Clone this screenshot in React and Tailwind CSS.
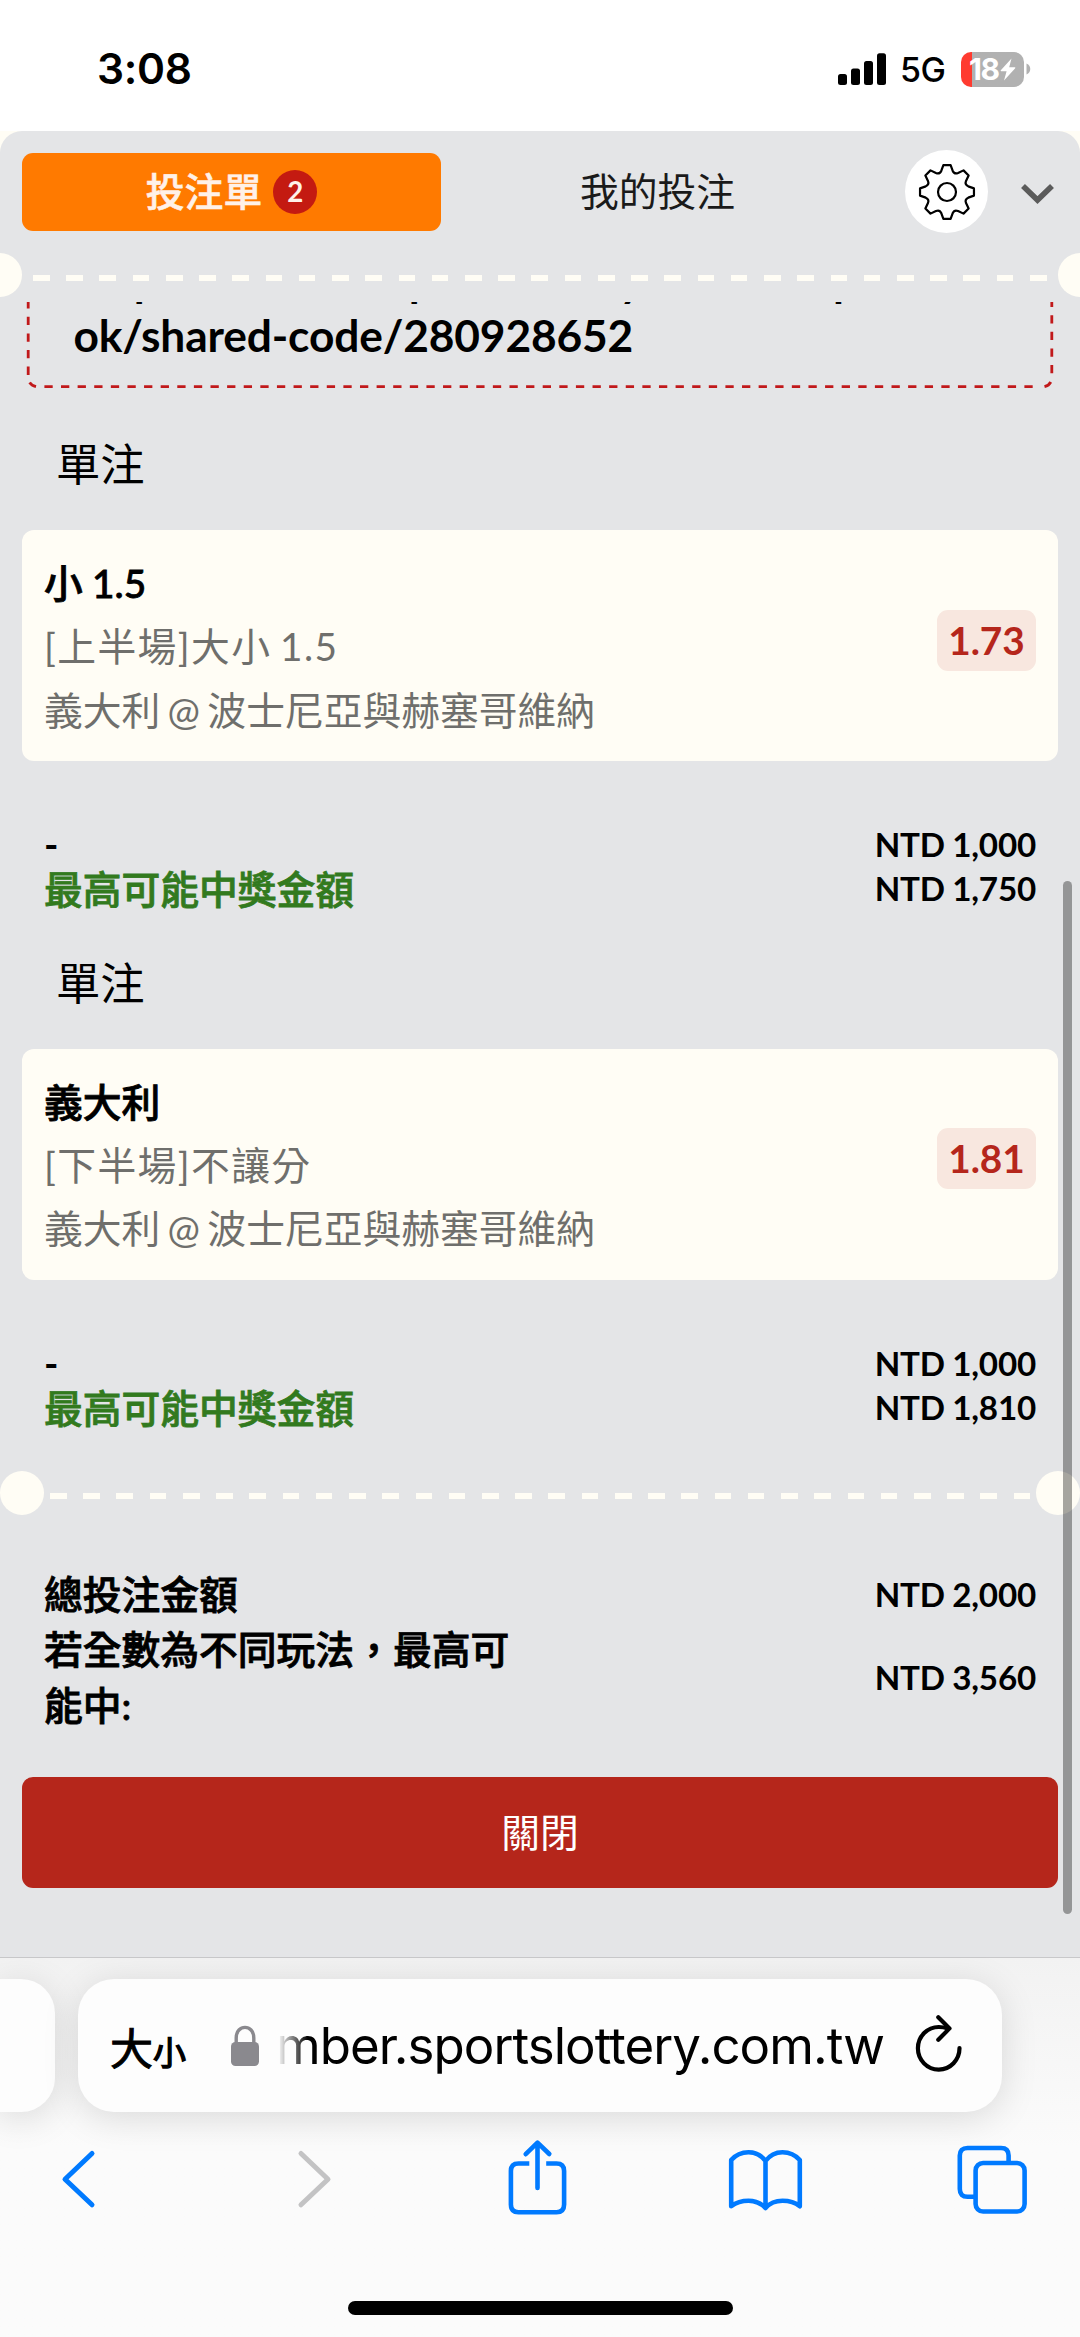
const BETS = [
  {
    pick: '小 1.5',
    market: '[上半場]大小 1.5',
    match: '義大利 @ 波士尼亞與赫塞哥維納',
    odds: '1.73',
    stake: 'NTD 1,000',
    payout: 'NTD 1,750',
  },
  {
    pick: '義大利',
    market: '[下半場]不讓分',
    match: '義大利 @ 波士尼亞與赫塞哥維納',
    odds: '1.81',
    stake: 'NTD 1,000',
    payout: 'NTD 1,810',
  },
]

// Gear outline: straight tooth flanks joined by rounded valleys
function gearPath(teeth, cx, cy) {
  const step = (Math.PI * 2) / teeth
  const at = (angle, r) => `${(cx + Math.cos(angle) * r).toFixed(2)} ${(cy + Math.sin(angle) * r).toFixed(2)}`
  let d = ''
  for (let i = 0; i < teeth; i++) {
    const a = i * step - Math.PI / 2
    d += `${i === 0 ? 'M' : 'L'}${at(a - step * 0.17, 27.2)}L${at(a + step * 0.17, 27.2)}`
    d += `L${at(a + step * 0.33, 22)}Q${at(a + step * 0.5, 19)} ${at(a + step * 0.67, 22)}`
  }
  return `${d}Z`
}

function StatusBar() {
  return (
    <div className="flex h-[131px] items-start justify-between bg-white pr-[49px] pl-[97px] font-['Inter',sans-serif] text-black">
      <span className="mt-[43px] text-[42.5px] leading-[52px] font-semibold tracking-[-0.3px]">3:08</span>
      <div className="mt-[51px] flex items-center">
        <svg width="48" height="35" viewBox="0 0 48 35">
          <rect x="0" y="22" width="9" height="11" rx="2.5" />
          <rect x="13" y="16.5" width="9" height="16.5" rx="2.5" />
          <rect x="26" y="9" width="9" height="24" rx="2.5" />
          <rect x="39" y="1.3" width="9" height="31.7" rx="2.5" />
        </svg>
        <span className="mt-[1px] ml-[14px] w-[61px] text-[34px] leading-[35px] font-medium tracking-[-0.5px]">5G</span>
        <div className="flex h-[35px] w-[63px] items-center overflow-hidden rounded-[10px] bg-linear-to-r from-[#ff3b30] from-[18%] to-[#b1b1b1] to-[18%] pl-[8px] text-white">
          <span className="text-[30px] leading-[35px] font-bold tracking-[-1.5px]">18</span>
          <svg className="ml-[2px]" width="16" height="23" viewBox="0 0 16 23" fill="currentColor">
            <path d="M11.5 0.5 0.8 12.2Q0.2 13.2 1.3 13.3H6.6L4 22.5 15.2 10.2Q15.8 9.3 14.7 9.2H9.2Z" />
          </svg>
        </div>
        <svg className="ml-[2px]" width="5" height="12" viewBox="0 0 5 12">
          <path d="M0.5 0.5C5.5 2.5 5.5 9.5 0.5 11.5Z" fill="#b1b1b1" />
        </svg>
      </div>
    </div>
  )
}

function Header() {
  return (
    <div className="flex h-[122px] items-start pt-[22px] pl-[22px] text-[38.77px]">
      <div className="flex h-[78px] w-[419px] items-center justify-center rounded-[11px] bg-[#ff7a00] font-medium text-[#fff1e8]">
        <span className="pb-[2px] [-webkit-text-stroke:0.6px]">投注單</span>
        <span className="ml-[11px] flex size-[44px] items-center justify-center rounded-full bg-[#c41a11] text-[27.7px] leading-none font-bold">2</span>
      </div>
      <div className="flex h-[78px] w-[433px] items-center justify-center pb-[2px] text-[#1a1a1a]">我的投注</div>
      <div className="mt-[-3px] ml-[31px] flex size-[83px] items-center justify-center rounded-full bg-white">
        <svg width="60" height="60" viewBox="0 0 60 60" fill="none" stroke="#000" strokeWidth="2.2" strokeLinejoin="round">
          <path d={gearPath(8, 30, 30)} />
          <circle cx="30" cy="30" r="9" />
        </svg>
      </div>
      <svg className="mt-[29px] ml-[32px]" width="36" height="24" viewBox="0 0 36 24" fill="none" stroke="#5b5b5b" strokeWidth="5.6">
        <path d="M3 4 17.5 18 32 4" />
      </svg>
    </div>
  )
}

function Perforation({ inset }) {
  return (
    <div className="flex h-[44px] items-start justify-between">
      <span className={`size-[44px] shrink-0 rounded-full bg-[#fffdf5] ${inset ? '' : 'ml-[-22px]'}`} />
      <span
        className={`mt-[22px] h-[5.6px] bg-[repeating-linear-gradient(to_right,#fffdf5_0_16.615px,transparent_16.615px_33.23px)] ${
          inset ? 'w-[980px]' : 'w-[1014px]'
        }`}
      />
      <span className={`size-[44px] shrink-0 rounded-full bg-[#fffdf5] ${inset ? '' : 'mr-[-22px]'}`} />
    </div>
  )
}

// Lower part of the share box, the upper lines are scrolled out of view
function ShareBox() {
  return (
    <div className="relative h-[87px] overflow-hidden">
      <svg className="absolute inset-0" width="1080" height="87" viewBox="0 0 1080 87" fill="none" stroke="#c1191b" strokeWidth="2.8">
        <path d="M28.2 -1.8V74" strokeDasharray="8.3 8.3" />
        <path d="M1051.8 -2.4V74" strokeDasharray="8.3 8.3" strokeDashoffset="1" />
        <path d="M44.4 84.7H1037" strokeDasharray="8.3 8.31" />
        <path d="M29.6 80.5Q31.5 83.5 36 84.7M1050.8 80Q1049 83.5 1044.5 84.7" />
      </svg>
      <div className="mt-[-50.5px] w-[1000px] pl-[73.5px] text-[44.3px] leading-[55.4px] font-bold tracking-[-0.15px] text-black">
        <p className="pl-[3px]">https://member.sportslottery.com.tw/sportsbo</p>
        <p>ok/shared-code/280928652</p>
      </div>
    </div>
  )
}

function BetCard({ bet }) {
  return (
    <section className="h-[518.5px]">
      <h2 className="h-[104px] pl-[56px] text-[44.3px] leading-[60px] text-black">單注</h2>
      <div className="mx-[22px] mt-[-8px] flex h-[231px] items-start justify-between rounded-[12px] bg-[#fffdf5] px-[22px] pt-[22px]">
        <div className="text-[38.77px] leading-[63.3px] text-[#6f6f6c] [word-spacing:-2.6px]">
          <p className="font-medium text-black [word-spacing:-0.5px] [-webkit-text-stroke:0.8px]">{bet.pick}</p>
          <p className="tracking-[1.4px]">{bet.market}</p>
          <p>{bet.match}</p>
        </div>
        <span className="mt-[57.5px] flex h-[61px] w-[99px] items-center justify-center rounded-[11px] bg-[#f8e7df] text-[38.77px] font-bold text-[#b5261b]">
          {bet.odds}
        </span>
      </div>
      <div className="flex justify-between px-[44px] pt-[61px] font-bold">
        <div className="text-[38.77px] leading-[45px]">
          <p className="text-black">-</p>
          <p className="font-medium text-[#327a1e] [-webkit-text-stroke:0.8px]">最高可能中獎金額</p>
        </div>
        <div className="text-right text-[33.2px] leading-[44.3px] tracking-[-0.2px] text-black [word-spacing:-0.5px]">
          <p>{bet.stake}</p>
          <p>{bet.payout}</p>
        </div>
      </div>
    </section>
  )
}

function Totals() {
  return (
    <div className="px-[44px] pt-[52px] text-[38.77px] leading-[55.4px] font-medium text-black">
      <div className="flex items-center justify-between">
        <p className="[-webkit-text-stroke:0.8px]">總投注金額</p>
        <p className="text-[33.2px] font-bold tracking-[-0.2px] [word-spacing:-0.5px]">NTD 2,000</p>
      </div>
      <div className="flex items-center justify-between">
        <p className="w-[480px] [-webkit-text-stroke:0.8px]">若全數為不同玩法，最高可能中:</p>
        <p className="text-[33.2px] font-bold tracking-[-0.2px] [word-spacing:-0.5px]">NTD 3,560</p>
      </div>
    </div>
  )
}

function AddressBar() {
  return (
    <div className="flex h-[133px] gap-[23px]">
      <div className="w-[55px] rounded-r-[34px] bg-[#fdfdfd] shadow-[0_6px_36px_rgba(0,0,0,0.13)]" />
      <div className="flex w-[924px] items-center rounded-[36px] bg-[#fdfdfd] pl-[32px] shadow-[0_6px_36px_rgba(0,0,0,0.13)]">
        <span className="flex w-[120px] items-baseline font-['Noto_Sans_CJK_TC',sans-serif] leading-none text-black">
          <span className="text-[43px] leading-[60px] [-webkit-text-stroke:1px]">大</span>
          <span className="text-[33px] [-webkit-text-stroke:1.4px]">小</span>
        </span>
        <svg width="30" height="42" viewBox="0 0 30 42">
          <path d="M6.2 20V13C6.2 -1.2 23.8 -1.2 23.8 13V20" fill="none" stroke="#8a898e" strokeWidth="3.4" />
          <rect x="1" y="17" width="28" height="24" rx="4.5" fill="#8a898e" />
        </svg>
        <div className="ml-[18px] flex w-[606px] justify-end overflow-hidden [mask-image:linear-gradient(to_right,transparent,#000_30px)]">
          <span className="font-['Inter',sans-serif] text-[51px] leading-[70px] tracking-[-0.95px] text-black">member.sportslottery.com.tw</span>
        </div>
        <svg className="mt-[-4px] ml-[30px]" width="50" height="60" viewBox="0 0 50 60" fill="none" stroke="#000" strokeWidth="4.2" strokeLinecap="round" strokeLinejoin="round">
          <path d="M34 14.5Q29 13 25 13A20.8 21.3 0 1 0 45.5 34" />
          <path d="M24.3 3.2 35.5 14.4 24.3 25.8" />
        </svg>
      </div>
    </div>
  )
}

function Toolbar() {
  return (
    <div className="mt-[26px] flex justify-between pr-[50px] pl-[44px] text-[#007aff]">
      <svg width="76" height="80" viewBox="0 0 76 80" fill="none" stroke="currentColor" strokeWidth="5" strokeLinecap="round" strokeLinejoin="round">
        <path d="M48 15.5 21 41.2 48 66.8" />
      </svg>
      <svg className="text-[#c3c3c4]" width="76" height="80" viewBox="0 0 76 80" fill="none" stroke="currentColor" strokeWidth="5" strokeLinecap="round" strokeLinejoin="round">
        <path d="M29 15.5 56 41.2 29 66.8" />
      </svg>
      <svg width="76" height="80" viewBox="0 0 76 80" fill="none" stroke="currentColor" strokeWidth="4.6" strokeLinejoin="round">
        <path d="M30.3 25.5H19.5Q11.9 25.5 11.9 33V66.5Q11.9 74.2 19.5 74.2H57.5Q65.1 74.2 65.1 66.5V33Q65.1 25.5 57.5 25.5H47.2" />
        <path d="M38.5 50V5M26.7 16.2 38.5 4.6 50.3 16" strokeLinecap="round" />
      </svg>
      <svg width="76" height="80" viewBox="0 0 76 80" fill="none" stroke="currentColor" strokeWidth="4.6" strokeLinecap="round" strokeLinejoin="round">
        <path d="M38.5 23Q32 14.2 21.5 14.2T4.2 22V68.2Q11.5 62.8 21.5 62.8T38.5 70Q45 62.8 55.5 62.8T72.8 68.2V22Q66 14.2 55.5 14.2T38.5 23V70" />
      </svg>
      <svg width="76" height="80" viewBox="0 0 76 80" fill="none" stroke="currentColor" strokeWidth="4.6">
        <rect x="21.6" y="25" width="49" height="48.5" rx="7.5" />
        <path d="M21.6 58.8H13.5Q5.8 58.8 5.8 51V17.5Q5.8 10 13.5 10H47Q54.6 10 54.6 17.5V25" />
      </svg>
    </div>
  )
}

export default function App() {
  return (
    <div className="h-[2337px] w-[1080px] overflow-hidden bg-[#fffdf5] font-['Lato','Noto_Sans_CJK_TC',sans-serif]">
      <StatusBar />
      <main className="relative h-[1826px] overflow-hidden rounded-t-[22px] bg-[#e4e5e7]">
        <Header />
        <Perforation />
        <div className="mt-[5px]">
          <ShareBox />
          <div className="mt-[45px]">
            {BETS.map((bet) => (
              <BetCard key={bet.pick} bet={bet} />
            ))}
          </div>
          <Perforation inset />
          <Totals />
          <button className="mx-[22px] mt-[44px] block h-[111px] w-[1036px] rounded-[11px] bg-[#b5261b] pb-[2px] text-[38.77px] text-white">關閉</button>
        </div>
        <div className="absolute top-[750px] right-[8px] h-[1033px] w-[9px] rounded-full bg-black/35" />
      </main>
      <footer className="h-[380px] border-t border-[#c8c8ca] bg-linear-to-b from-[#f2f2f2] to-[#fbfbfb] to-50% pt-[21px]">
        <AddressBar />
        <Toolbar />
        <div className="mx-auto mt-[83px] h-[14px] w-[385px] rounded-full bg-black" />
      </footer>
    </div>
  )
}
